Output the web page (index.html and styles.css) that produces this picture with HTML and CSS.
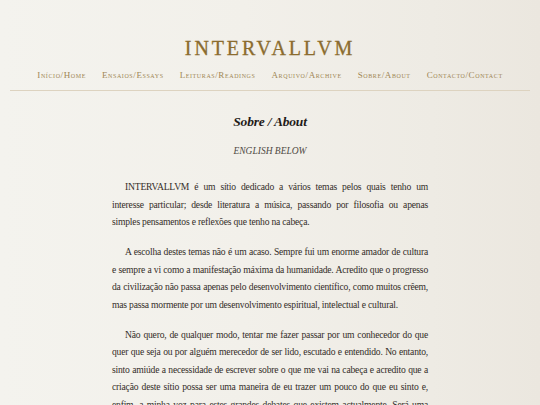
FILE: index.html
```html
<!DOCTYPE html>
<html lang="pt">
<head>
<meta charset="utf-8">
<title>Sobre / About – INTERVALLVM</title>
<link rel="stylesheet" href="styles.css">
</head>
<body>
<header class="site-header">
  <h1 class="logo">INTERVALLVM</h1>
  <nav class="nav">
    <a href="#">Início/Home</a>
    <a href="#">Ensaios/Essays</a>
    <a href="#">Leituras/Readings</a>
    <a href="#">Arquivo/Archive</a>
    <a href="#">Sobre/About</a>
    <a href="#">Contacto/Contact</a>
  </nav>
</header>
<main class="content">
  <h2 class="page-title">Sobre / About</h2>
  <p class="note">ENGLISH BELOW</p>
  <p class="para">
    <span class="ln">INTERVALLVM é um sítio dedicado a vários temas pelos quais tenho um</span>
    <span class="ln">interesse particular; desde literatura a música, passando por filosofia ou apenas</span>
    <span class="ln end">simples pensamentos e reflexões que tenho na cabeça.</span>
  </p>
  <p class="para">
    <span class="ln">A escolha destes temas não é um acaso. Sempre fui um enorme amador de cultura</span>
    <span class="ln">e sempre a vi como a manifestação máxima da humanidade. Acredito que o progresso</span>
    <span class="ln">da civilização não passa apenas pelo desenvolvimento científico, como muitos crêem,</span>
    <span class="ln end">mas passa mormente por um desenvolvimento espiritual, intelectual e cultural.</span>
  </p>
  <p class="para">
    <span class="ln">Não quero, de qualquer modo, tentar me fazer passar por um conhecedor do que</span>
    <span class="ln">quer que seja ou por alguém merecedor de ser lido, escutado e entendido. No entanto,</span>
    <span class="ln">sinto amiúde a necessidade de escrever sobre o que me vai na cabeça e acredito que a</span>
    <span class="ln">criação deste sítio possa ser uma maneira de eu trazer um pouco do que eu sinto e,</span>
    <span class="ln">enfim, a minha voz para estes grandes debates que existem actualmente. Será uma</span>
  </p>
</main>
</body>
</html>
```
FILE: styles.css
```css
html, body {
  margin: 0;
  padding: 0;
}
body {
  height: 405px;
  background: linear-gradient(90deg, #f4f3ee 0%, #f2f0ea 45%, #eeebe4 80%, #ebe7df 100%);
  font-family: "Liberation Serif", "DejaVu Serif", serif;
  color: #2b2622;
  overflow: hidden;
}
.site-header {
  padding: 36px 10px 0;
}
.logo {
  margin: 0;
  text-align: center;
  font-family: "Liberation Serif", serif;
  font-weight: normal;
  font-size: 20px;
  line-height: 24px;
  letter-spacing: 2.9px;
  color: #8b6c2e;
  -webkit-text-stroke: 0.3px #8b6c2e;
}
.nav {
  display: flex;
  justify-content: center;
  gap: 16px;
  margin-top: 9px;
  padding-bottom: 9px;
  border-bottom: 1px solid #ddd3c0;
}
.nav a {
  font-size: 9px;
  font-variant: small-caps;
  letter-spacing: 0.6px;
  color: #a08755;
  text-decoration: none;
  line-height: 12px;
}
.content {
  width: 316px;
  margin: 0 auto;
  padding-top: 22px;
}
.page-title {
  margin: 0;
  text-align: center;
  font-size: 13.5px;
  font-style: italic;
  font-weight: bold;
  line-height: 18px;
  letter-spacing: -0.2px;
  color: #1f1b18;
}
.note {
  margin: 13px 0 0;
  text-align: center;
  font-size: 9.5px;
  font-style: italic;
  color: #4f4a44;
  line-height: 14px;
}
.para {
  margin: 20px 0 0;
  font-size: 9.6px;
  line-height: 17.5px;
  letter-spacing: -0.2px;
  color: #332d28;
}
.para + .para {
  margin-top: 12.5px;
}
.ln {
  display: block;
  white-space: nowrap;
  text-align: justify;
  text-align-last: justify;
}
.ln:first-child {
  text-indent: 13px;
}
.ln.end {
  text-align-last: left;
}
```
